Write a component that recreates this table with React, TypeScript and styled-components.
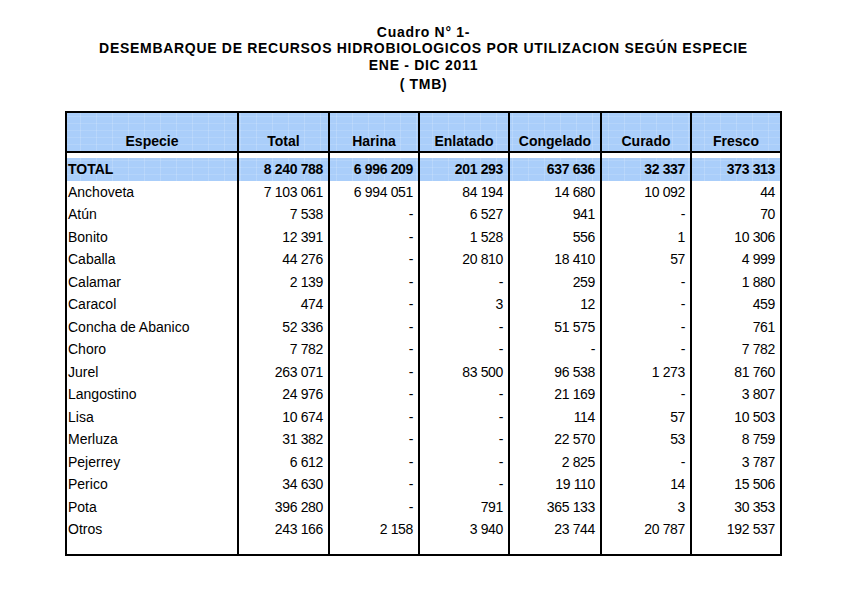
import React from "react";
import styled, { createGlobalStyle } from "styled-components";

const Global = createGlobalStyle`
  html, body { margin: 0; padding: 0; background: #fff; }
  body { font-family: "Liberation Sans", Arial, sans-serif; color: #000; }
`;

const COLS = "172px 91px 90px 90px 92px 90px 90px";
const BLUE = "#aacefa";
const gridPattern = `
  repeating-linear-gradient(90deg, transparent 0 15px, rgba(255,255,255,0.16) 15px 16px),
  repeating-linear-gradient(0deg, transparent 0 6px, rgba(255,255,255,0.12) 6px 7px)
`;

const Page = styled.div`
  width: 717px;
  margin-left: 65px;
  padding-top: 25.3px;
`;

const Title = styled.div`
  text-align: center;
  font-weight: bold;
  font-size: 14px;
  letter-spacing: 0.7px;
  line-height: 15.7px;
`;

const TitleLine = styled.div<{ $gap: number }>`
  margin-top: ${(p) => p.$gap}px;
  white-space: nowrap;
`;

const Table = styled.div`
  margin-top: 18px;
  border-top: 2px solid #000;
  border-bottom: 2px solid #000;
  font-size: 14px;
`;

const Row = styled.div<{ $height: number; $blue?: boolean; $rule?: boolean }>`
  display: grid;
  grid-template-columns: ${COLS};
  height: ${(p) => p.$height}px;
  line-height: ${(p) => p.$height}px;
  border-right: 2px solid #000;
  background-color: ${(p) => (p.$blue ? BLUE : "transparent")};
  background-image: ${(p) => (p.$blue ? gridPattern : "none")};
  border-bottom: ${(p) => (p.$rule ? "2px solid #000" : "none")};
  box-sizing: content-box;
`;

const Cell = styled.div<{ $num?: boolean; $bold?: boolean }>`
  box-sizing: border-box;
  border-left: 2px solid #000;
  white-space: nowrap;
  overflow: hidden;
  font-weight: ${(p) => (p.$bold ? "bold" : "normal")};
  text-align: ${(p) => (p.$num ? "right" : "left")};
  padding: ${(p) => (p.$num ? "0 5px 0 0" : "0 0 0 1px")};
  letter-spacing: ${(p) => (p.$num ? "-0.35px" : "0")};
`;

const HeadCell = styled.div`
  box-sizing: border-box;
  border-left: 2px solid #000;
  display: flex;
  align-items: flex-end;
  justify-content: center;
  padding-bottom: 2px;
  font-weight: bold;
  line-height: 16px;
  white-space: nowrap;
`;

const headers = ["Especie", "Total", "Harina", "Enlatado", "Congelado", "Curado", "Fresco"];

const total = ["8 240 788", "6 996 209", "201 293", "637 636", "32 337", "373 313"];

const rows: [string, string[]][] = [
  ["Anchoveta", ["7 103 061", "6 994 051", "84 194", "14 680", "10 092", "44"]],
  ["Atún", ["7 538", "-", "6 527", "941", "-", "70"]],
  ["Bonito", ["12 391", "-", "1 528", "556", "1", "10 306"]],
  ["Caballa", ["44 276", "-", "20 810", "18 410", "57", "4 999"]],
  ["Calamar", ["2 139", "-", "-", "259", "-", "1 880"]],
  ["Caracol", ["474", "-", "3", "12", "-", "459"]],
  ["Concha de Abanico", ["52 336", "-", "-", "51 575", "-", "761"]],
  ["Choro", ["7 782", "-", "-", "-", "-", "7 782"]],
  ["Jurel", ["263 071", "-", "83 500", "96 538", "1 273", "81 760"]],
  ["Langostino", ["24 976", "-", "-", "21 169", "-", "3 807"]],
  ["Lisa", ["10 674", "-", "-", "114", "57", "10 503"]],
  ["Merluza", ["31 382", "-", "-", "22 570", "53", "8 759"]],
  ["Pejerrey", ["6 612", "-", "-", "2 825", "-", "3 787"]],
  ["Perico", ["34 630", "-", "-", "19 110", "14", "15 506"]],
  ["Pota", ["396 280", "-", "791", "365 133", "3", "30 353"]],
  ["Otros", ["243 166", "2 158", "3 940", "23 744", "20 787", "192 537"]],
];

const EmptyRow = ({ h }: { h: number }) => (
  <Row $height={h}>
    {headers.map((x) => (
      <Cell key={x} />
    ))}
  </Row>
);

export default function App() {
  return (
    <>
      <Global />
      <Page>
        <Title>
          <TitleLine $gap={0}>Cuadro N° 1-</TitleLine>
          <TitleLine $gap={0}>DESEMBARQUE DE RECURSOS HIDROBIOLOGICOS POR UTILIZACION SEGÚN ESPECIE</TitleLine>
          <TitleLine $gap={1.6}>ENE - DIC 2011</TitleLine>
          <TitleLine $gap={3.3}>( TMB)</TitleLine>
        </Title>
        <Table>
          <Row $height={38} $blue $rule>
            {headers.map((h) => (
              <HeadCell key={h}>{h}</HeadCell>
            ))}
          </Row>
          <EmptyRow h={5} />
          <Row $height={22.5} $blue>
            <Cell $bold>TOTAL</Cell>
            {total.map((v, i) => (
              <Cell key={i} $num $bold>
                {v}
              </Cell>
            ))}
          </Row>
          {rows.map(([name, vals]) => (
            <Row key={name} $height={22.5}>
              <Cell>{name}</Cell>
              {vals.map((v, i) => (
                <Cell key={i} $num>
                  {v}
                </Cell>
              ))}
            </Row>
          ))}
          <EmptyRow h={13.5} />
        </Table>
      </Page>
    </>
  );
}
